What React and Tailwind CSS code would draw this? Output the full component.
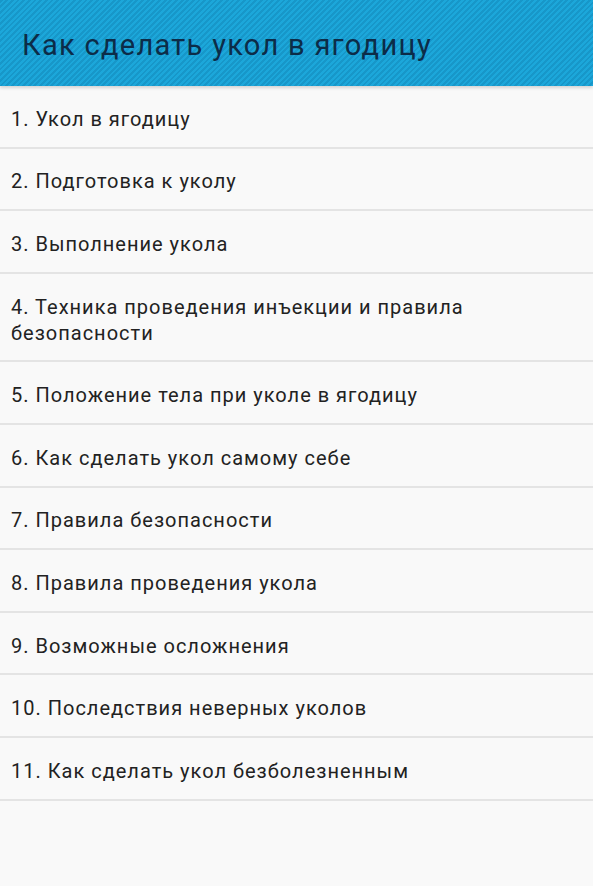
import React from "react";

const items = [
  "1. Укол в ягодицу",
  "2. Подготовка к уколу",
  "3. Выполнение укола",
  "4. Техника проведения инъекции и правила безопасности",
  "5. Положение тела при уколе в ягодицу",
  "6. Как сделать укол самому себе",
  "7. Правила безопасности",
  "8. Правила проведения укола",
  "9. Возможные осложнения",
  "10. Последствия неверных уколов",
  "11. Как сделать укол безболезненным",
];

export default function App() {
  return (
    <div className="w-[593px] h-[886px] bg-[#f9f9f9] overflow-hidden" style={{ fontFamily: "Roboto, sans-serif" }}>
      <div className="relative h-[86px] flex items-center pl-[22px] pt-[6px] bg-[#1ca3d6] bg-[repeating-linear-gradient(-45deg,#1ca7da_0px,#1ca7da_2px,#1797c9_2px,#1797c9_4px)] shadow-[0_2px_3px_rgba(0,0,0,0.15)]">
        <h1 className="text-[29px] tracking-[1.3px] text-[#0c2c48]">Как сделать укол в ягодицу</h1>
      </div>
      <ul>
        {items.map((t, i) => (
          <li
            key={i}
            className="border-b-2 border-[#e4e4e4] pl-[11px] pr-[110px] pt-[19.8px] pb-[14.8px] text-[20px] leading-[26px] tracking-[1px] text-[#222222]"
          >
            {t}
          </li>
        ))}
      </ul>
    </div>
  );
}
